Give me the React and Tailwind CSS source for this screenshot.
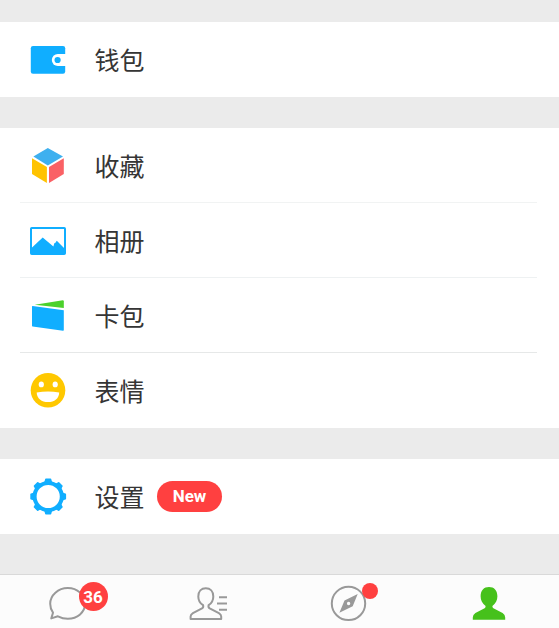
import React from 'react';

const WalletIcon = () => (
  <>
    <rect x="2.8" y="7" width="34.4" height="27.8" rx="2.2" fill="#10aeff" />
    <path d="M38 15h-8.2a6 6 0 0 0 0 12H38z" fill="#fff" />
    <circle cx="29.6" cy="21" r="3.1" fill="#10aeff" />
  </>
);

const FavoritesIcon = () => (
  <>
    <path d="M19.8 3L35 11.4L19.8 20.4L5.4 11.4z" fill="#3eb0ef" />
    <path d="M4 13.2L18.9 22V38L4 29z" fill="#ffc300" />
    <path d="M35.8 13.2L21 22V38L35.8 29z" fill="#fa6165" />
  </>
);

const AlbumIcon = () => (
  <>
    <rect x="3" y="8" width="34" height="26" rx="0.8" fill="none" stroke="#10aeff" strokeWidth="2" />
    <path d="M3.5 28L14.7 17.6L25.4 26.4L26.2 23.6L26.8 22.9L27.2 23.1L28.8 20.8L37 29V34H3.5z" fill="#10aeff" />
  </>
);

const CardsIcon = () => (
  <>
    <path d="M6.8 9.7L34.8 5.3Q35.8 5.3 35.8 6.2V12.9z" fill="#4bd12c" />
    <path d="M4.6 10.9L35.8 15.3V35Q35.8 35.8 35 35.7L4.6 31.6Q4 31.5 4 30.8V11.5Q4 10.8 4.6 10.9z" fill="#10aeff" />
  </>
);

const StickersIcon = () => (
  <>
    <circle cx="20" cy="20.3" r="17.3" fill="#ffc800" />
    <ellipse cx="13.3" cy="14.4" rx="2.6" ry="2.9" fill="#fff" />
    <ellipse cx="27.2" cy="14.4" rx="2.6" ry="2.9" fill="#fff" />
    <path d="M8.7 22.4Q20 20.8 31.2 22.4C31 28.5 26.5 32 20 32S8.9 28.5 8.7 22.4z" fill="#fff" />
  </>
);

const SettingsIcon = () => (
  <g transform="translate(20.2 20.5)">
    <circle r="13.6" fill="none" stroke="#10aeff" strokeWidth="4" />
    {[0, 45, 90, 135, 180, 225, 270, 315].map((angle) => (
      <path key={angle} transform={`rotate(${angle})`} d="M-3.9-14.3L-3.1-17.2Q-3-17.9-2.3-17.9H2.3Q3-17.9 3.1-17.2L3.9-14.3z" fill="#10aeff" />
    ))}
  </g>
);

const ChatIcon = () => (
  <path d="M3 28.7C1.1 26.1 0.2 22.7 0.2 19.8C0.2 11.1 8.2 4.1 17.8 4.1S35.1 11 35.1 19.6S27.4 34.8 17.8 34.8C14.2 34.8 10.8 33.8 7.9 32.3L1.3 34.4z" fill="none" stroke="#999" strokeWidth="2" strokeLinejoin="round" />
);

const ContactsIcon = () => (
  <g fill="none" stroke="#999" strokeWidth="2">
    <path d="M13.1 21.2C10 19.2 8.3 16 8.3 12.4C8.3 7.2 11.4 4.2 15.8 4.2S23.3 7.2 23.3 12.4C23.3 16 21.6 19.2 18.6 21.2Q18 23.3 19.7 24.4L28.9 29.1Q31.2 30.4 31.2 32.6V34.9H0.6V32.6Q0.6 30.4 2.9 29.1L12 24.4Q13.7 23.3 13.1 21.2z" strokeLinejoin="round" />
    <path d="M29 13.3H37M27 19.5H37M29 25.7H37" />
  </g>
);

const DiscoverIcon = () => (
  <>
    <circle cx="18.5" cy="19.4" r="16.7" fill="none" stroke="#999" strokeWidth="2" />
    <path fillRule="evenodd" d="M27.7 10.1L22.7 22.2L9.4 28.7L14.5 16.4zM18.6 17.8a1.7 1.7 0 1 0 0 3.4a1.7 1.7 0 0 0 0-3.4z" fill="#999" />
  </>
);

const MeIcon = () => (
  <path d="M15.6 22C12.4 19.8 10.6 16.5 10.6 12.3C10.6 6.3 13.9 3 19 3S27.4 6.3 27.4 12.3C27.4 16.5 25.6 19.8 22.4 22Q22.2 23.5 23.4 24.3L32.6 29.1Q35.2 30.8 35.2 33.5V35.8H2.8V33.5Q2.8 30.8 5.4 29.1L14.6 24.3Q15.8 23.5 15.6 22z" fill="#46c11b" />
);

const sections = [
  [{ label: '钱包', icon: WalletIcon }],
  [
    { label: '收藏', icon: FavoritesIcon, border: 'border-[#f1f3f3]' },
    { label: '相册', icon: AlbumIcon, border: 'border-[#eef1f2]' },
    { label: '卡包', icon: CardsIcon, border: 'border-[#e6e8e8]' },
    { label: '表情', icon: StickersIcon }
  ],
  [{ label: '设置', icon: SettingsIcon, badge: 'New' }]
];

const tabs = [
  { id: 'chats', icon: ChatIcon, count: 36 },
  { id: 'contacts', icon: ContactsIcon },
  { id: 'discover', icon: DiscoverIcon, dot: true },
  { id: 'me', icon: MeIcon }
];

const MenuRow = ({ item }) => {
  const Icon = item.icon;
  return (
    <div className="h-[75px] pr-[22px] pl-5">
      <div className={`flex h-full items-center border-b pl-2 ${item.border || 'border-transparent'}`}>
        <svg className="h-10 w-10 shrink-0" viewBox="0 0 40 40">
          <Icon />
        </svg>
        <span className="ml-[26.5px] text-[25px] leading-none text-[#353535]">{item.label}</span>
        {item.badge && (
          <span className="ml-[12.5px] flex h-[31px] w-[65px] items-center justify-center rounded-full bg-[#ff4040] pt-0.5 font-[Roboto,sans-serif] text-[17px] font-bold text-white">
            {item.badge}
          </span>
        )}
      </div>
    </div>
  );
};

const App = () => {
  return (
    <div className="flex h-[628px] w-[559px] flex-col overflow-hidden bg-[#ebebeb] font-['Noto_Sans_CJK_SC',sans-serif]">
      {/* Menu */}
      <div className="flex flex-1 flex-col gap-[31px] pt-[22px]">
        {sections.map((items, i) => (
          <div key={i} className="bg-white">
            {items.map((item) => (
              <MenuRow key={item.label} item={item} />
            ))}
          </div>
        ))}
      </div>

      {/* Tab bar */}
      <div className="flex h-[54px] shrink-0 border-t border-[#d9d9d9] bg-[#fcfcfc] pt-[9px]">
        {tabs.map(({ id, icon: Icon, count, dot }) => (
          <div key={id} className="flex w-[140px] shrink-0 justify-center">
            <div className="relative h-10 w-10">
              <svg className="h-10 w-10 overflow-visible" viewBox="0 0 40 40">
                <Icon />
              </svg>
              {count && (
                <span className="absolute -top-0.5 left-[29px] flex h-[29px] w-[29px] items-center justify-center rounded-full bg-[#ff4040] pt-0.5 pr-px font-[Roboto,sans-serif] text-[17px] font-bold text-white">
                  {count}
                </span>
              )}
              {dot && <span className="absolute -top-px left-8 h-4 w-4 rounded-full bg-[#ff4040]" />}
            </div>
          </div>
        ))}
      </div>
    </div>
  );
};

export default App;
